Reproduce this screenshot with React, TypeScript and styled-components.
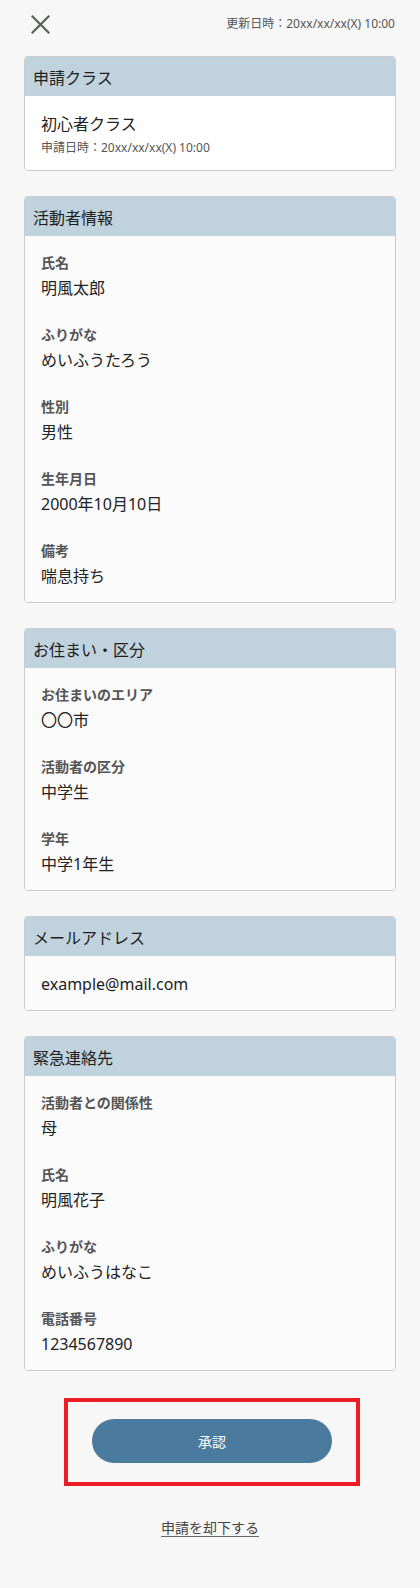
import React from "react";
import styled, { createGlobalStyle } from "styled-components";

const GlobalStyle = createGlobalStyle`
  html, body {
    margin: 0;
    padding: 0;
    background: #f7f7f7;
  }
  body {
    font-family: "Noto Sans", "Noto Sans CJK JP", sans-serif;
    color: #222;
    -webkit-font-smoothing: antialiased;
  }
  * { box-sizing: border-box; }
`;

const Page = styled.div`
  width: 420px;
  min-height: 1588px;
  padding: 0 24px 40px;
  background: #f7f7f7;
  display: flex;
  flex-direction: column;
`;

const TopBar = styled.header`
  height: 48px;
  margin-bottom: 8px;
  display: flex;
  align-items: center;
  justify-content: space-between;
`;

const CloseButton = styled.button`
  width: 32px;
  height: 32px;
  padding: 0 0 0 7px;
  border: none;
  background: transparent;
  display: flex;
  align-items: center;
  cursor: pointer;
`;

const Updated = styled.span`
  font-size: 12px;
  line-height: 18px;
  color: #555;
  margin-right: 1px;
`;

const CardList = styled.div`
  display: flex;
  flex-direction: column;
  gap: 25px;
`;

const Card = styled.section`
  border: 1px solid #cccccc;
  border-radius: 4px;
  overflow: hidden;
  background: #fafafa;
`;

const CardHeader = styled.h2`
  margin: 0;
  height: 39px;
  padding: 0 8px;
  display: flex;
  align-items: center;
  background: #bfd2dd;
  font-size: 16px;
  font-weight: 400;
  color: #1e1e1e;
`;

const CardBody = styled.div<{ $white?: boolean }>`
  padding: 15px 16px 13px;
  background: ${(p) => (p.$white ? "#ffffff" : "#fafafa")};
  display: flex;
  flex-direction: column;
  gap: 22px;
`;

const Field = styled.div`
  display: flex;
  flex-direction: column;
`;

const Label = styled.div`
  font-size: 14px;
  line-height: 24px;
  font-weight: 700;
  color: #555;
`;

const Value = styled.div`
  font-size: 16px;
  line-height: 26px;
  color: #222;
`;

const SubValue = styled.div`
  font-size: 12px;
  line-height: 18px;
  margin-top: 2px;
  color: #555;
`;

const Highlight = styled.div`
  margin: 27px 0 0 40px;
  width: 296px;
  border: 4px solid #ec1c24;
  padding: 17px 22px 19px;
  display: flex;
  justify-content: center;
`;

const PrimaryButton = styled.button`
  width: 240px;
  height: 44px;
  border: none;
  border-radius: 22px;
  background: #4a7b9f;
  color: #fff;
  font-family: "Noto Sans", "Noto Sans CJK JP", sans-serif;
  font-size: 14px;
  font-weight: 400;
  cursor: pointer;
`;

const LinkRow = styled.div`
  display: flex;
  justify-content: center;
  margin-top: 32px;
`;

const TextLink = styled.a`
  font-size: 14px;
  line-height: 20px;
  color: #444;
  text-decoration: underline;
  text-underline-offset: 3px;
  text-decoration-color: #666;
  cursor: pointer;
`;

type Item = { label: string; value: string };

const CloseIcon = () => (
  <svg width="19" height="19" viewBox="0 0 19 19" aria-hidden="true">
    <path d="M1.5 1.5 L17.5 17.5 M17.5 1.5 L1.5 17.5" stroke="#5c6154" strokeWidth="2.2" strokeLinecap="square" fill="none" />
  </svg>
);

const FieldCard = ({ title, items }: { title: string; items: Item[] }) => (
  <Card>
    <CardHeader>{title}</CardHeader>
    <CardBody>
      {items.map((it) => (
        <Field key={it.label}>
          <Label>{it.label}</Label>
          <Value>{it.value}</Value>
        </Field>
      ))}
    </CardBody>
  </Card>
);

export default function App() {
  return (
    <>
      <GlobalStyle />
      <Page>
        <TopBar>
          <CloseButton aria-label="閉じる">
            <CloseIcon />
          </CloseButton>
          <Updated>更新日時：20xx/xx/xx(X) 10:00</Updated>
        </TopBar>
        <CardList>
          <Card>
            <CardHeader>申請クラス</CardHeader>
            <CardBody $white>
              <div>
                <Value>初心者クラス</Value>
                <SubValue>申請日時：20xx/xx/xx(X) 10:00</SubValue>
              </div>
            </CardBody>
          </Card>
          <FieldCard
            title="活動者情報"
            items={[
              { label: "氏名", value: "明風太郎" },
              { label: "ふりがな", value: "めいふうたろう" },
              { label: "性別", value: "男性" },
              { label: "生年月日", value: "2000年10月10日" },
              { label: "備考", value: "喘息持ち" },
            ]}
          />
          <FieldCard
            title="お住まい・区分"
            items={[
              { label: "お住まいのエリア", value: "〇〇市" },
              { label: "活動者の区分", value: "中学生" },
              { label: "学年", value: "中学1年生" },
            ]}
          />
          <Card>
            <CardHeader>メールアドレス</CardHeader>
            <CardBody>
              <Value>example@mail.com</Value>
            </CardBody>
          </Card>
          <FieldCard
            title="緊急連絡先"
            items={[
              { label: "活動者との関係性", value: "母" },
              { label: "氏名", value: "明風花子" },
              { label: "ふりがな", value: "めいふうはなこ" },
              { label: "電話番号", value: "1234567890" },
            ]}
          />
        </CardList>
        <Highlight>
          <PrimaryButton>承認</PrimaryButton>
        </Highlight>
        <LinkRow>
          <TextLink>申請を却下する</TextLink>
        </LinkRow>
      </Page>
    </>
  );
}
